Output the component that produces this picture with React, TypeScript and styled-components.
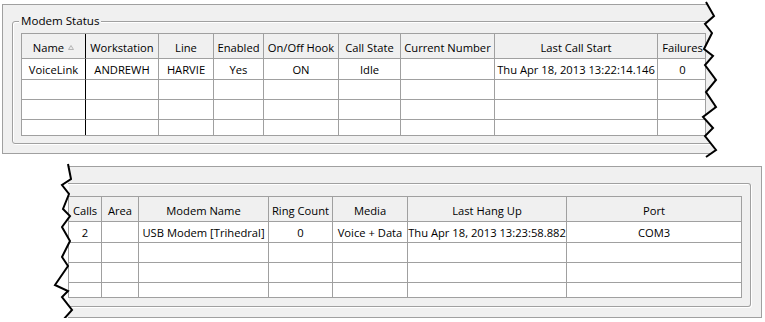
import React from 'react'
import styled, { createGlobalStyle } from 'styled-components'

type Side = 'left' | 'right'

interface Column {
  title: string
  width: string
  sorted?: boolean
}

interface Point {
  x: number
  y: number
}

const GlobalStyle = createGlobalStyle`
  body {
    margin: 0;
    background: #fff;
    color: #000;
    font-family: "Open Sans", "Noto Sans", sans-serif;
  }
`

const Page = styled.div`
  display: flex;
  flex-direction: column;
  align-items: flex-start;
  gap: 12px;
  padding: 4px 0 0 2px;
`

const Window = styled.div<{ $width: number; $offset: number; $open: Side }>`
  position: relative;
  box-sizing: border-box;
  width: ${props => props.$width}px;
  margin-left: ${props => props.$offset}px;
  background: #f0f0f0;
  border: 1px solid #a0a0a0;
  border-${props => props.$open}: none;
`

const GroupBox = styled.div<{ $open: Side; $margin: string; $padding: string }>`
  position: relative;
  border: 1px solid #a0a0a0;
  border-radius: 3px;
  box-shadow: 1px 1px 0 #fff, inset 1px 1px 0 #fff;
  margin: ${props => props.$margin};
  padding: ${props => props.$padding};
  ${props => props.$open === 'left' && 'border-left: none; border-radius: 0 3px 3px 0;'}
`

const Legend = styled.span`
  position: absolute;
  left: 6px;
  top: -8px;
  padding: 0 2px;
  background: #f0f0f0;
  font-size: 11.6px;
  line-height: 14px;
`

const Grid = styled.div<{ $height: number }>`
  box-sizing: border-box;
  height: ${props => props.$height}px;
  border: 1px solid #a0a0a0;
  background: #fff;
  overflow: hidden;
  font-size: 11.2px;
`

const Row = styled.div<{ $cols: string }>`
  display: grid;
  grid-template-columns: ${props => props.$cols};
  height: 20px;

  &:nth-child(2) {
    height: 21px;
  }
`

const HeaderRow = styled(Row)`
  height: 25px;
`

const Cell = styled.div<{ $dark?: boolean }>`
  box-sizing: border-box;
  display: flex;
  align-items: center;
  justify-content: center;
  min-width: 0;
  overflow: hidden;
  white-space: nowrap;
  border-right: 1px solid ${props => (props.$dark ? '#000' : '#a0a0a0')};
  border-bottom: 1px solid #a0a0a0;

  &:last-child {
    border-right: none;
  }
`

const HeadCell = styled(Cell)`
  background: #f0f0f0;
  padding-top: 2px;
`

const SortArrow = styled.svg`
  margin-left: 4px;
  margin-top: 1px;
`

const TearOverlay = styled.svg<{ $left: number; $top: number }>`
  position: absolute;
  left: ${props => props.$left}px;
  top: ${props => props.$top}px;
  z-index: 1;
  overflow: visible;
`

const topColumns: Column[] = [
  { title: 'Name', width: '64px', sorted: true },
  { title: 'Workstation', width: '73px' },
  { title: 'Line', width: '55px' },
  { title: 'Enabled', width: '50px' },
  { title: 'On/Off Hook', width: '75px' },
  { title: 'Call State', width: '62px' },
  { title: 'Current Number', width: '94px' },
  { title: 'Last Call Start', width: '163px' },
  { title: 'Failures', width: '50px' },
  { title: '', width: '1fr' },
]

const bottomColumns: Column[] = [
  { title: 'Calls', width: '33px' },
  { title: 'Area', width: '37px' },
  { title: 'Modem Name', width: '130px' },
  { title: 'Ring Count', width: '64px' },
  { title: 'Media', width: '75px' },
  { title: 'Last Hang Up', width: '159px' },
  { title: 'Port', width: '1fr' },
]

const topRow = ['VoiceLink', 'ANDREWH', 'HARVIE', 'Yes', 'ON', 'Idle', '', 'Thu Apr 18, 2013 13:22:14.146', '0', '']
const bottomRow = ['2', '', 'USB Modem [Trihedral]', '0', 'Voice + Data', 'Thu Apr 18, 2013 13:23:58.882', 'COM3']

// page coordinates of the torn edges
const rightTear: Point[] = [
  { x: 706, y: 2 }, { x: 714, y: 16 }, { x: 705, y: 24 }, { x: 712, y: 33 },
  { x: 704, y: 49 }, { x: 713, y: 56 }, { x: 705, y: 65 }, { x: 716, y: 80 },
  { x: 706, y: 92 }, { x: 716, y: 107 }, { x: 703, y: 117 }, { x: 713, y: 128 },
  { x: 705, y: 136 }, { x: 716, y: 150 }, { x: 706, y: 157 },
]

const leftTear: Point[] = [
  { x: 68, y: 164 }, { x: 71, y: 179 }, { x: 62, y: 185 }, { x: 69, y: 194 },
  { x: 63, y: 209 }, { x: 70, y: 216 }, { x: 62, y: 227 }, { x: 70, y: 241 },
  { x: 62, y: 257 }, { x: 68, y: 266 }, { x: 55, y: 285 }, { x: 68, y: 291 },
  { x: 62, y: 297 }, { x: 72, y: 310 }, { x: 63, y: 320 },
]

interface TearProps {
  points: Point[]
  side: Side
  box: { x: number; y: number; w: number; h: number }
  origin: Point
}

const Tear: React.FC<TearProps> = ({ points, side, box, origin }) => {
  const first = points[0]
  const last = points[points.length - 1]
  const bottom = box.y + box.h
  const edge = side === 'right' ? box.x + box.w : box.x
  const fill = [
    { x: edge, y: box.y },
    { x: first.x, y: box.y },
    ...points,
    { x: last.x, y: bottom },
    { x: edge, y: bottom },
  ]
  const toStr = (list: Point[]) => list.map(p => `${p.x},${p.y}`).join(' ')

  return (
    <TearOverlay
      $left={box.x - origin.x}
      $top={box.y - origin.y}
      width={box.w}
      height={box.h}
      viewBox={`${box.x} ${box.y} ${box.w} ${box.h}`}
    >
      <polygon points={toStr(fill)} fill='#fff' />
      <polyline points={toStr(points)} fill='none' stroke='#000' strokeWidth='2' />
    </TearOverlay>
  )
}

interface TableProps {
  columns: Column[]
  row: string[]
  height: number
  divider?: boolean
}

const Table: React.FC<TableProps> = ({ columns, row, height, divider }) => {
  const cols = columns.map(c => c.width).join(' ')
  const empty = columns.map(() => '')

  return (
    <Grid $height={height}>
      <HeaderRow $cols={cols}>
        {columns.map((c, i) =>
          <HeadCell key={i} $dark={divider && i === 0}>
            {c.title}
            {c.sorted &&
              <SortArrow width='6' height='5' viewBox='0 0 6 5'>
                <polygon points='0.5,4.5 3,0.5 5.5,4.5' fill='#ececec' stroke='#b4b4b4' strokeWidth='1' />
              </SortArrow>}
          </HeadCell>
        )}
      </HeaderRow>
      {[row, empty, empty, empty].map((r, ri) =>
        <Row key={ri} $cols={cols}>
          {r.map((v, i) => <Cell key={i} $dark={divider && i === 0}>{v}</Cell>)}
        </Row>
      )}
    </Grid>
  )
}

const App: React.FC = () => {
  return (
    <>
      <GlobalStyle />
      <Page>
        <Window $width={723} $offset={0} $open='right'>
          <GroupBox $open='right' $margin='16px 10px 9px 9px' $padding='11px 8px 7px 8px'>
            <Legend>Modem Status</Legend>
            <Table columns={topColumns} row={topRow} height={103} divider />
          </GroupBox>
          <Tear points={rightTear} side='right' box={{ x: 695, y: 0, w: 70, h: 162 }} origin={{ x: 3, y: 5 }} />
        </Window>
        <Window $width={694} $offset={66} $open='left'>
          <GroupBox $open='left' $margin='16px 10px 10px 0' $padding='12px 8px 8px 0'>
            <Table columns={bottomColumns} row={bottomRow} height={102} />
          </GroupBox>
          <Tear points={leftTear} side='left' box={{ x: 40, y: 160, w: 40, h: 162 }} origin={{ x: 68, y: 167 }} />
        </Window>
      </Page>
    </>
  )
}

export default App
